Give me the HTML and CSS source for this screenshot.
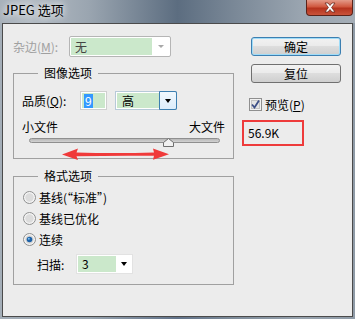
FILE: index.html
```html
<!DOCTYPE html>
<html lang="zh-CN">
<head>
    <meta charset="UTF-8">
    <title>JPEG 选项</title>
    <link rel="stylesheet" href="styles.css">
</head>
<body>
    <div class="window">
        <div class="titlebar">
            <span class="title">JPEG 选项</span>
            <div class="close-btn">
                <svg width="14" height="11" viewBox="0 0 14 11">
                    <path d="M2 1 L5 1 L7 3.5 L9 1 L12 1 L8.6 5.5 L12 10 L9 10 L7 7.5 L5 10 L2 10 L5.4 5.5 Z" fill="#fff" stroke="#6b2a20" stroke-width="0.8"/>
                </svg>
            </div>
        </div>
        <div class="client">
            <!-- Left column: matte + option groups -->
            <div class="left-col">
                <div class="matte-row">
                    <label class="disabled-label">杂边(<u>M</u>):</label>
                    <div class="combo combo-matte">
                        <span class="combo-value">无</span>
                        <span class="combo-drop"><span class="tri tri-gray"></span></span>
                    </div>
                </div>

                <fieldset class="group image-group">
                    <legend>图像选项</legend>
                    <div class="quality-row">
                        <label class="quality-label">品质(<u>Q</u>):</label>
                        <div class="num-input"><span class="num-fill"><span class="num-sel">9</span></span></div>
                        <div class="combo combo-quality">
                            <span class="combo-value">高</span>
                            <span class="combo-drop drop-active"><span class="tri"></span></span>
                        </div>
                    </div>
                    <div class="size-labels">
                        <span>小文件</span>
                        <span>大文件</span>
                    </div>
                    <div class="slider">
                        <div class="track"></div>
                        <svg class="thumb" width="11" height="9" viewBox="0 0 11 9">
                            <path d="M0.5 8.5 L0.5 4.5 L5.5 0.5 L10.5 4.5 L10.5 8.5 Z" fill="#f1f1f1" stroke="#6f6f6f"/>
                        </svg>
                        <svg class="red-arrow" width="107" height="12" viewBox="0 0 107 12">
                            <path d="M0 6.5 L16 0.5 L14.5 4.6 Q53 5.6 92 4.6 L91 0.5 L107 6.3 L91 11.8 L92 7.8 Q53 7.4 14.5 8.2 L16 12 Z" fill="#f03a3a"/>
                        </svg>
                    </div>
                </fieldset>

                <fieldset class="group format-group">
                    <legend>格式选项</legend>
                    <div class="radio-row">
                        <svg class="radio" width="13" height="13" viewBox="0 0 13 13">
                            <circle cx="6.5" cy="6.5" r="6" fill="#f4f4f4" stroke="#8e8f8f"/>
                            <circle cx="6.5" cy="6.5" r="4.2" fill="#dcdcdc"/>
                        </svg>
                        <span>基线(“标准”)</span>
                    </div>
                    <div class="radio-row">
                        <svg class="radio" width="13" height="13" viewBox="0 0 13 13">
                            <circle cx="6.5" cy="6.5" r="6" fill="#f4f4f4" stroke="#8e8f8f"/>
                            <circle cx="6.5" cy="6.5" r="4.2" fill="#dcdcdc"/>
                        </svg>
                        <span>基线已优化</span>
                    </div>
                    <div class="radio-row">
                        <svg class="radio" width="13" height="13" viewBox="0 0 13 13">
                            <circle cx="6.5" cy="6.5" r="6" fill="#f4f4f4" stroke="#8e8f8f"/>
                            <circle cx="6.5" cy="6.5" r="4.2" fill="#d4d4d4"/>
                            <circle cx="6.5" cy="6.5" r="2.8" fill="#1d62a8"/>
                            <circle cx="5.8" cy="5.7" r="1" fill="#7fc0f0"/>
                        </svg>
                        <span>连续</span>
                    </div>
                    <div class="scan-row">
                        <label class="scan-label">扫描:</label>
                        <div class="combo combo-scan">
                            <span class="combo-value">3</span>
                            <span class="combo-drop"><span class="tri"></span></span>
                        </div>
                    </div>
                </fieldset>
            </div>

            <!-- Right column: buttons, preview, file size -->
            <div class="right-col">
                <button class="win-btn default-btn">确定</button>
                <button class="win-btn reset-btn">复位</button>
                <div class="preview-row">
                    <svg class="checkbox" width="13" height="13" viewBox="0 0 13 13">
                        <rect x="0.5" y="0.5" width="12" height="12" fill="#f2f2f2" stroke="#8f8f8f"/>
                        <rect x="2.5" y="2.5" width="8" height="8" fill="#e4e4e4" stroke="#c4c4c4"/>
                        <path d="M3 6.5 L5.5 9.5 L10 2.5" fill="none" stroke="#3d4f86" stroke-width="1.8"/>
                    </svg>
                    <span>预览(<u>P</u>)</span>
                </div>
                <div class="size-box">56.9K</div>
            </div>
        </div>
    </div>
</body>
</html>
```

FILE: styles.css
```css
/* Colour palette */
:root {
    --client-bg: #ececec;
    --group-line: #a0a0a0;
    --field-green: #cbe8cb;
    --disabled-text: #a0a0a0;
    --annot-red: #ee3b3b;
}

body {
    margin: 0;
    font-family: "Noto Sans CJK SC", "Liberation Sans", sans-serif;
    font-size: 12px;
    color: #000;
}

.window {
    width: 355px;
    height: 319px;
    display: flex;
    flex-direction: column;
    background: linear-gradient(90deg, #a4aeb8 0%, #98a4af 25%, #62738a 50%, #7d8b99 65%, #98a3ae 85%, #8f9ba7 100%);
}

/* Title bar */
.titlebar {
    height: 23px;
    flex-shrink: 0;
    display: flex;
    align-items: flex-start;
    background: linear-gradient(90deg, #a8b1ba 0%, #b4bcc4 8%, #9aa5b0 25%, #5c6d80 50%, #7a8897 66%, #9aa5b0 85%, #a5aeb7 100%);
}
.title {
    font-size: 13px;
    line-height: 16px;
    padding: 2px 0 0 3px;
    text-shadow: 0 0 6px #fff, 0 0 10px rgba(255, 255, 255, 0.7);
}
.close-btn {
    margin-left: auto;
    margin-right: 2px;
    width: 47px;
    height: 16px;
    box-sizing: border-box;
    border: 1px solid #5b2218;
    border-top: none;
    border-radius: 0 0 4px 4px;
    background: linear-gradient(#e39a88, #d0583f 45%, #b5331d 55%, #c9533a);
    display: flex;
    align-items: center;
    justify-content: center;
}

/* Client area */
.client {
    flex: 1;
    margin: 0 2px 2px;
    border: 1px solid #4b4b4b;
    background: var(--client-bg);
    display: flex;
}

.left-col {
    width: 221px;
    padding: 12px 0 0 10px;
}

.matte-row {
    height: 21px;
    display: flex;
    align-items: center;
}
.disabled-label {
    width: 56px;
    color: var(--disabled-text);
}

/* Combo boxes */
.combo {
    display: flex;
    box-sizing: border-box;
    border: 1px solid #c4c4c4;
    background: #fff;
    padding: 1px;
}
.combo-value {
    flex: 1;
    background: var(--field-green);
    line-height: 17px;
    padding-left: 4px;
}
.combo-drop {
    display: flex;
    align-items: center;
    justify-content: center;
}
.tri {
    width: 0;
    height: 0;
    border-left: 3.5px solid transparent;
    border-right: 3.5px solid transparent;
    border-top: 4px solid #000;
}
.tri-gray {
    border-left-width: 3px;
    border-right-width: 3px;
    border-top: 3px solid #a8a8a8;
}
.combo-matte {
    width: 102px;
    height: 21px;
    border-color: #b5b5b5;
    border-radius: 2px;
}
.combo-matte .combo-value {
    color: #444;
}
.combo-matte .combo-drop {
    width: 17px;
}

/* Option groups */
.group {
    margin: 0;
    min-width: 0;
    border: 1px solid var(--group-line);
}
.group legend {
    margin-left: 16px;
    padding: 0 6px;
    line-height: 16px;
}
.image-group {
    margin-top: 8px;
    padding: 10px 8px 10px 8px;
}
.format-group {
    margin-top: 9px;
    padding: 3px 8px 10px 8px;
}

.quality-row {
    height: 19px;
    display: flex;
    align-items: center;
}
.quality-label {
    width: 58px;
}
.num-input {
    width: 27px;
    height: 19px;
    box-sizing: border-box;
    border: 1px solid #cfcfcf;
    background: #fff;
    padding: 1px;
    display: flex;
}
.num-fill {
    flex: 1;
    background: var(--field-green);
    padding-left: 2px;
    display: flex;
    align-items: center;
}
.num-sel {
    background: #3399ff;
    color: #fff;
    line-height: 14px;
    padding: 0 1px;
}
.combo-quality {
    width: 62px;
    height: 19px;
    margin-left: 8px;
    border-color: #b7c9d8;
}
.combo-quality .combo-value {
    line-height: 15px;
    padding-left: 5px;
}
.drop-active {
    width: 16px;
    margin: -2px -2px -2px 0;
    border: 1px solid #3c7fb1;
    border-radius: 0 2px 2px 0;
    background: linear-gradient(#f0f8fe, #dcedfb);
}

.size-labels {
    margin-top: 9px;
    line-height: 16px;
    display: flex;
    justify-content: space-between;
}

.slider {
    position: relative;
    height: 10px;
}
.track {
    height: 5px;
    margin: 3px 5px 0 7px;
    box-sizing: border-box;
    border: 1px solid #8f8f8f;
    border-radius: 3px;
    background: linear-gradient(#b8b8b8, #d2d2d2);
}
.thumb {
    position: absolute;
    left: 141px;
    top: 0;
}
.red-arrow {
    position: absolute;
    left: 40px;
    top: 10px;
}

.radio-row {
    height: 21px;
    display: flex;
    align-items: center;
}
.radio {
    margin-left: 1px;
    margin-right: 3px;
}

.scan-row {
    margin-top: 4px;
    height: 20px;
    display: flex;
    align-items: center;
}
.scan-label {
    width: 39px;
    margin-left: 15px;
}
.combo-scan {
    width: 57px;
    height: 20px;
    border-color: #e2e2e2;
}
.combo-scan .combo-value {
    flex: 0 0 38px;
    line-height: 16px;
    padding-left: 4px;
    box-sizing: border-box;
}
.combo-scan .combo-drop {
    flex: 1;
}

/* Right column */
.right-col {
    margin-left: 8px;
    padding-top: 13px;
    display: flex;
    flex-direction: column;
    align-items: flex-start;
}
.win-btn {
    width: 90px;
    height: 19px;
    margin-left: 9px;
    padding: 0;
    font-family: inherit;
    font-size: 12px;
    line-height: 15px;
    color: #000;
    border: 1px solid #707070;
    border-radius: 3px;
    background: linear-gradient(#f2f2f2 0%, #ebebeb 45%, #dddddd 50%, #cfcfcf 100%);
}
.default-btn {
    border-color: #3c7fb1;
    box-shadow: inset 0 0 0 1px #9fdcf8;
}
.reset-btn {
    margin-top: 8px;
}

.preview-row {
    margin-top: 15px;
    margin-left: 7px;
    height: 13px;
    display: flex;
    align-items: center;
    gap: 3px;
}

.size-box {
    margin-top: 9px;
    width: 62px;
    height: 26px;
    box-sizing: border-box;
    border: 2px solid var(--annot-red);
    padding-left: 4px;
    line-height: 22px;
}
```
